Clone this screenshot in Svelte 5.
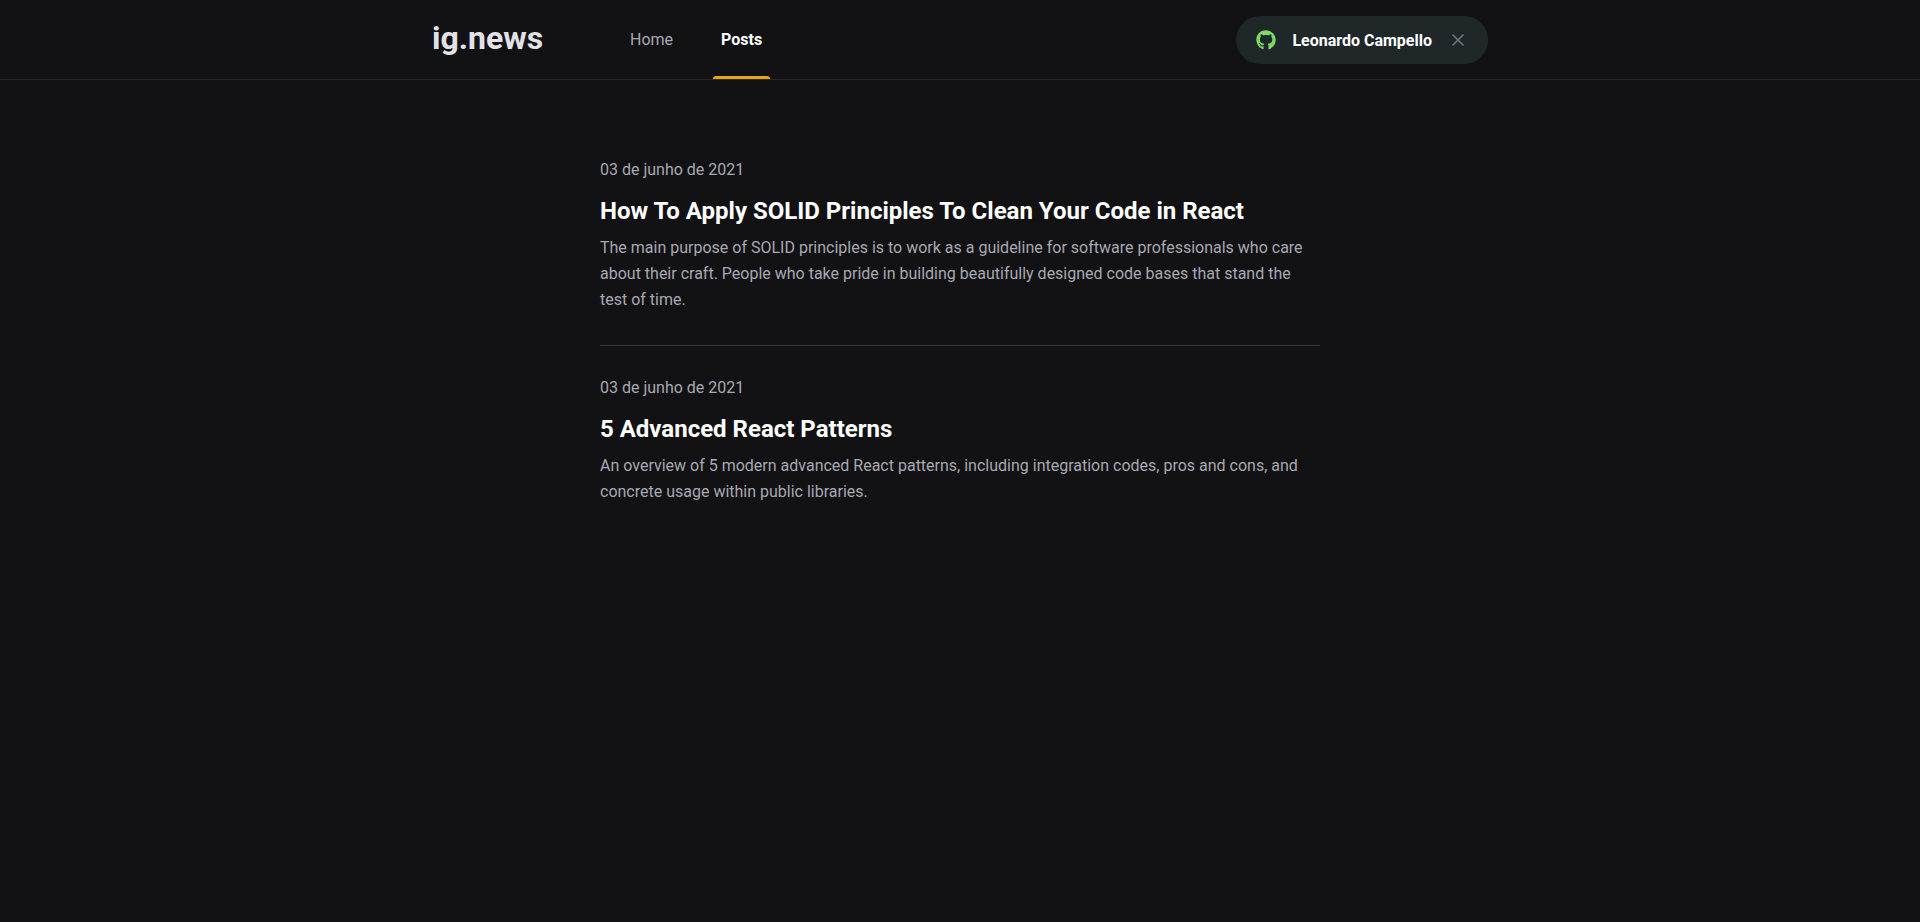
<script>
  const posts = [
    {
      date: '03 de junho de 2021',
      title: 'How To Apply SOLID Principles To Clean Your Code in React',
      excerpt:
        'The main purpose of SOLID principles is to work as a guideline for software professionals who care about their craft. People who take pride in building beautifully designed code bases that stand the test of time.'
    },
    {
      date: '03 de junho de 2021',
      title: '5 Advanced React Patterns',
      excerpt:
        'An overview of 5 modern advanced React patterns, including integration codes, pros and cons, and concrete usage within public libraries.'
    }
  ];
</script>

<header>
  <div class="bar">
    <a class="logo" href="/">ig.news</a>
    <nav>
      <a href="/">Home</a>
      <a class="active" href="/posts">Posts</a>
    </nav>
    <button type="button">
      <svg class="github" viewBox="0 0 496 512" fill="#7bdb65" aria-hidden="true">
        <path d="M165.9 397.4c0 2-2.3 3.600-5.200 3.600-3.300.3-5.600-1.300-5.600-3.600 0-2 2.300-3.600 5.200-3.600 3-.3 5.600 1.300 5.600 3.600zm-31.100-4.500c-.7 2 1.300 4.300 4.300 4.900 2.600 1 5.600 0 6.200-2s-1.300-4.300-4.300-5.200c-2.600-.7-5.500.3-6.200 2.300zm44.200-1.700c-2.900.7-4.900 2.600-4.600 4.900.3 2 2.900 3.300 5.900 2.600 2.900-.7 4.900-2.600 4.600-4.600-.3-1.900-3-3.200-5.900-2.900zM244.800 8C106.100 8 0 113.300 0 252c0 110.900 69.800 205.800 169.500 239.200 12.800 2.300 17.300-5.600 17.300-12.100 0-6.200-.3-40.400-.3-61.400 0 0-70 15-84.700-29.800 0 0-11.400-29.100-27.800-36.600 0 0-22.900-15.700 1.600-15.400 0 0 24.900 2 38.600 25.800 21.900 38.600 58.600 27.500 72.900 20.900 2.300-16 8.800-27.100 16-33.700-55.900-6.200-112.300-14.300-112.300-110.500 0-27.500 7.600-41.300 23.600-58.900-2.600-6.500-11.100-33.300 2.600-67.900 20.900-6.500 69 27 69 27 20-5.600 41.500-8.500 62.800-8.500s42.800 2.900 62.800 8.500c0 0 48.100-33.600 69-27 13.700 34.700 5.200 61.400 2.600 67.900 16 17.700 25.800 31.500 25.800 58.900 0 96.500-58.900 104.200-114.800 110.500 9.200 7.900 17 22.900 17 46.400 0 33.700-.3 75.400-.3 83.600 0 6.500 4.600 14.400 17.300 12.100C428.200 457.800 496 362.900 496 252 496 113.300 383.500 8 244.800 8zM97.200 352.900c-1.300 1-1 3.300.7 5.200 1.600 1.600 3.900 2.300 5.200 1 1.300-1 1-3.300-.7-5.200-1.600-1.600-3.900-2.300-5.200-1zm-10.800-8.100c-.7 1.300.3 2.900 2.300 3.900 1.600 1 3.600.7 4.300-.7.7-1.300-.3-2.900-2.300-3.900-2-.6-3.600-.3-4.300.7zm32.400 35.600c-1.600 1.300-1 4.300 1.300 6.200 2.300 2.300 5.200 2.600 6.500 1 1.300-1.300.7-4.300-1.300-6.200-2.200-2.300-5.200-2.600-6.500-1zm-11.400-14.700c-1.600 1-1.600 3.600 0 5.900 1.600 2.300 4.300 3.300 5.600 2.300 1.600-1.300 1.600-3.900 0-6.200-1.400-2.300-4-3.300-5.600-2z" />
      </svg>
      Leonardo Campello
      <svg class="close" viewBox="0 0 24 24" fill="none" stroke="#737380" stroke-width="2" stroke-linecap="round" aria-hidden="true">
        <path d="M18 6 6 18M6 6l12 12" />
      </svg>
    </button>
  </div>
</header>

<main>
  {#each posts as post}
    <a href="/posts">
      <time>{post.date}</time>
      <strong>{post.title}</strong>
      <p>{post.excerpt}</p>
    </a>
  {/each}
</main>

<style>
  :global(body) {
    background: #121214;
    color: #fff;
    font: 400 16px Roboto, sans-serif;
  }

  a {
    color: inherit;
    text-decoration: none;
  }

  header {
    height: 80px;
    box-sizing: border-box;
    border-bottom: 1px solid #29292e;
  }

  .bar {
    max-width: 1120px;
    height: 80px;
    margin: 0 auto;
    padding: 0 32px;
    box-sizing: border-box;
    display: flex;
    align-items: center;
  }

  .logo {
    width: 110px;
    padding-bottom: 4px;
    color: #e1e1e6;
    font-size: 32px;
    font-weight: 700;
    line-height: 40px;
  }

  nav {
    display: flex;
    gap: 32px;
    height: 80px;
    margin-left: 80px;
  }

  nav a {
    position: relative;
    padding: 0 8px;
    line-height: 80px;
    color: #a8a8b3;
  }

  nav .active {
    color: #fff;
    font-weight: 700;
  }

  .active::after {
    content: '';
    position: absolute;
    left: 0;
    bottom: 1px;
    width: 100%;
    height: 3px;
    border-radius: 3px 3px 0 0;
    background: #eba417;
  }

  button {
    margin-left: auto;
    height: 48px;
    padding: 0 20px;
    display: flex;
    align-items: center;
    border: 0;
    border-radius: 24px;
    background: #1f2729;
    color: #fff;
    font: 700 16px Roboto, sans-serif;
  }

  .github {
    width: 20px;
    height: 20px;
    margin-right: 16px;
  }

  .close {
    width: 20px;
    height: 20px;
    margin-left: 16px;
  }

  main {
    max-width: 720px;
    margin: 80px auto 0;
  }

  main a {
    display: block;
  }

  main a + a {
    margin-top: 32px;
    padding-top: 32px;
    border-top: 1px solid #323238;
  }

  time {
    display: block;
    color: #a8a8b3;
    line-height: 19px;
  }

  strong {
    display: block;
    margin-top: 16px;
    font-size: 24px;
    line-height: 32px;
  }

  p {
    margin: 8px 0 0;
    color: #a8a8b3;
    line-height: 26px;
  }
</style>
